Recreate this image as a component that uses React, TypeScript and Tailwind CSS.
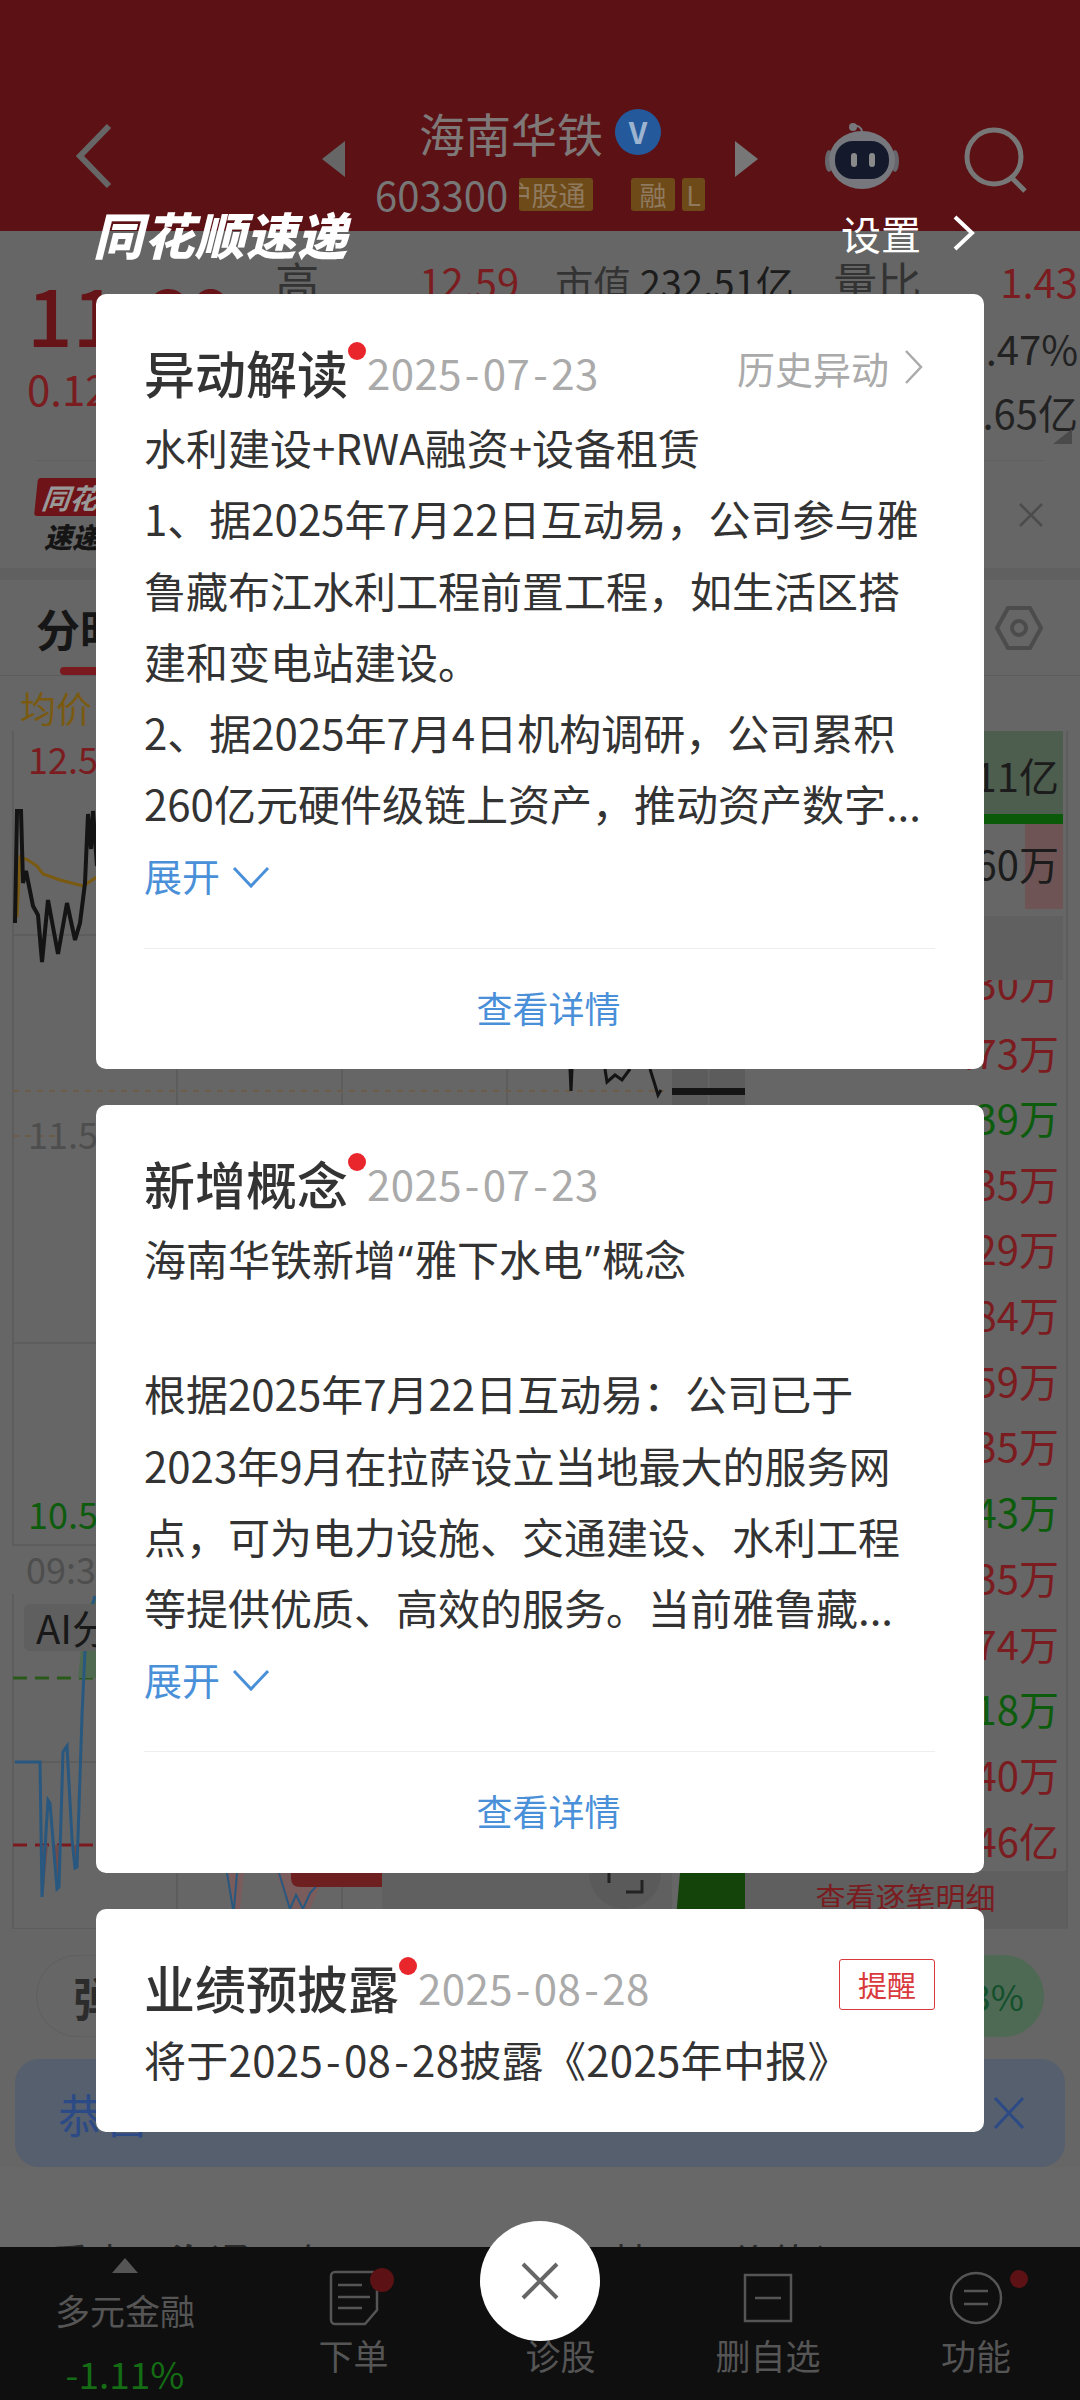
import type { ReactNode } from "react";

const red = "text-[#7a1c20]";
const green = "text-[#0d5c0d]";

const depthRows: [string, string][] = [
  ["39万", green],
  ["2.35万", red],
  ["1.29万", red],
  ["3.84万", red],
  ["1.59万", red],
  ["2.35万", red],
  ["1.43万", green],
  ["2.35万", red],
  ["1.74万", red],
  ["2.18万", green],
  ["1.40万", red],
  ["1.46亿", red],
];

const tabs = [
  { label: "下单", width: "w-[207px]" },
  { label: "诊股", width: "w-[207px]" },
  { label: "删自选", width: "w-[208px]" },
  { label: "功能", width: "w-[208px]" },
];

function Robot() {
  return (
    <svg width="76" height="66" viewBox="0 0 76 66">
      <path d="M38 8c-1-4-5-6-8-5" fill="none" stroke="#77777c" strokeWidth="2" />
      <circle cx="29" cy="4" r="4" fill="#77777c" />
      <ellipse cx="5" cy="38" rx="4" ry="11" fill="#66666c" />
      <ellipse cx="71" cy="38" rx="4" ry="11" fill="#66666c" />
      <ellipse cx="38" cy="37" rx="33" ry="29" fill="#77777e" />
      <rect x="11" y="18" width="54" height="38" rx="18" fill="#141a2c" />
      <rect x="27" y="30" width="6" height="14" rx="3" fill="#8a8a8a" />
      <rect x="45" y="30" width="6" height="14" rx="3" fill="#8a8a8a" />
    </svg>
  );
}

function Tag({ children, width }: { children: ReactNode; width: string }) {
  return (
    <span className={`${width} h-[33px] rounded-[3px] bg-[#6e4a18] text-[#8f7a5f] text-[27px] leading-[33px] text-center overflow-hidden whitespace-nowrap`}>
      {children}
    </span>
  );
}

function Header() {
  return (
    <header className="h-[231px] bg-[#5c1215] flex items-start pt-[107px]">
      <div className="w-[322px] pl-[75px] pt-[16px]">
        <svg width="40" height="66" viewBox="0 0 40 66">
          <path d="M34 3 5 33l29 30" fill="none" stroke="#666" strokeWidth="6" />
        </svg>
      </div>
      <div className="w-0 h-0 mt-[34px] border-y-[18px] border-y-transparent border-r-[23px] border-r-[#666]" />
      <div className="w-[390px] flex flex-col items-center">
        <div className="flex items-center gap-[12px] h-[50px]">
          <span className="text-[46px] leading-[50px] text-[#7f7878]">海南华铁</span>
          <span className="w-[46px] h-[46px] rounded-full bg-[#245a9c] text-[#9db4d0] text-[30px] leading-[44px] font-bold text-center">V</span>
        </div>
        <div className="flex items-center mt-[21px] h-[33px]">
          <span className="w-[144px] text-[40px] leading-[33px] text-[#777]">603300</span>
          <Tag width="w-[74px]">
            <span className="inline-block ml-[-22px]">沪股通</span>
          </Tag>
          <span className="w-[38px]" />
          <Tag width="w-[44px]">融</Tag>
          <span className="w-[7px]" />
          <Tag width="w-[23px]">L</Tag>
        </div>
      </div>
      <div className="w-0 h-0 mt-[34px] border-y-[18px] border-y-transparent border-l-[23px] border-l-[#777]" />
      <div className="ml-[66px] mt-[16px]">
        <Robot />
      </div>
      <div className="ml-[60px] mt-[16px]">
        <svg width="72" height="72" viewBox="0 0 72 72">
          <circle cx="34" cy="34" r="27" fill="none" stroke="#777" strokeWidth="5" />
          <path d="m52 55 13 13" stroke="#777" strokeWidth="5" />
        </svg>
      </div>
    </header>
  );
}

function Quote() {
  return (
    <section className="h-[229px] flex pt-[25px] relative">
      <div className="w-[280px] pl-[27px] pt-[11px]">
        <div className="text-[#661418] text-[80px] leading-[90px] font-medium">11.60</div>
        <div className={`${red} text-[42px] leading-[50px] mt-[6px]`}>0.12</div>
      </div>
      <div className="flex-1 pr-[2px]">
        <div className="flex items-center h-[50px] text-[40px] text-[#333] whitespace-nowrap">
          <span className="w-[144px] text-[44px]">高</span>
          <span className={`w-[136px] ${red}`}>12.59</span>
          <span className="w-[278px] text-[38px]">
            市值 <span className="text-[#1c1c1c]">232.51亿</span>
          </span>
          <span className="w-[167px] text-[44px]">量比</span>
          <span className={red}>1.43</span>
        </div>
        <div className="text-right text-[#222] text-[40px] leading-[50px] mt-[17px]">3.47%</div>
        <div className="text-right text-[#222] text-[40px] leading-[50px] mt-[14px]">1.65亿</div>
      </div>
      <div className="absolute right-[8px] bottom-[16px] w-0 h-0 border-b-[15px] border-b-[#4a4a4a] border-l-[19px] border-l-transparent" />
    </section>
  );
}

function NewsStrip() {
  return (
    <section className="mx-[36px] h-[108px] border-t border-[#5f5f5f] flex items-center justify-between">
      <div className="flex flex-col">
        <span className="w-[100px] h-[38px] bg-[#6e1418] text-[#999] italic font-bold text-[28px] leading-[38px] pl-[6px] -skew-x-6 rounded-[3px]">同花顺</span>
        <span className="text-[#151515] italic font-black text-[28px] leading-[32px] mt-[4px] pl-[8px]">速递</span>
      </div>
      <svg width="26" height="26" viewBox="0 0 26 26">
        <path d="m2 2 22 22M24 2 2 24" stroke="#4c4c4c" strokeWidth="2.5" />
      </svg>
    </section>
  );
}

function Tabs() {
  return (
    <section className="h-[108px] border-t-[12px] border-[#606060] border-b border-b-[#5c5c5c] flex items-center justify-between pl-[36px] pr-[36px] relative">
      <span className="text-[44px] font-bold text-[#161616]">分时</span>
      <svg width="50" height="46" viewBox="0 0 50 46">
        <path d="M14 3h22l11 20-11 20H14L3 23Z" fill="none" stroke="#4c4c4c" strokeWidth="4" strokeLinejoin="round" />
        <circle cx="25" cy="23" r="7" fill="none" stroke="#4c4c4c" strokeWidth="4" />
      </svg>
      <span className="absolute left-[60px] bottom-0 w-[60px] h-[8px] rounded-full bg-[#7a1a1e]" />
    </section>
  );
}

function Chart() {
  return (
    <div className="w-[745px] h-[1198px] relative shrink-0">
      <svg className="absolute inset-0" width="745" height="1198" viewBox="0 731 745 1198">
        <g stroke="#5d5d5d" strokeWidth="2" fill="none">
          <path d="M13 731V1545H745M13 1594V1929H745M13 935H672M13 1343H672M13 1762H672" />
          <path d="M177 731V1545M342 731V1545M507 731V1545M177 1594V1929M342 1594V1929M507 1594V1929" />
        </g>
        <path d="M13 1091H664M13 1136H60" stroke="#6b5d4a" strokeWidth="2" strokeDasharray="6 6" />
        <path d="M13 1678H96" stroke="#2a5a1a" strokeWidth="3" strokeDasharray="14 8" />
        <path d="M13 1845H96" stroke="#7a1a1e" strokeWidth="3" strokeDasharray="14 8" />
        <polyline
          points="17,917 20,857 28,860 37,866 43,874 60,880 83,886 97,877"
          fill="none"
          stroke="#7a5a10"
          strokeWidth="3"
        />
        <polyline
          points="15,923 17,811 21,811 23,883 26,871 33,906 38,915 42,962 48,900 58,954 67,903 75,940 80,923 85,883 88,814 91,849 93,811 97,866"
          fill="none"
          stroke="#141414"
          strokeWidth="4"
        />
        <polyline points="570,1069 571,1091 572,1069" fill="none" stroke="#141414" strokeWidth="3" />
        <polyline points="605,1069 607,1082 615,1075 622,1080 630,1069" fill="none" stroke="#141414" strokeWidth="3" />
        <polyline points="650,1069 655,1085 658,1095 661,1090" fill="none" stroke="#141414" strokeWidth="3" />
        <rect x="672" y="1069" width="73" height="36" fill="#5c5c5c" />
        <rect x="708" y="1069" width="1.5" height="36" fill="#666" />
        <rect x="672" y="1088" width="73" height="7" fill="#141414" />
        <path d="M42 1845 43 1897 48 1845ZM52 1845 57 1889 60 1845ZM72 1845 75 1868 78 1845Z" fill="#6e4c4c" />
        <path d="M82 1640 87 1607 96 1596V1678H78Z" fill="#4f6a50" />
        <polyline
          points="15,1762 40,1762 42,1897 48,1800 50,1803 57,1889 59,1887 63,1752 67,1746 72,1839 75,1868 77,1867 82,1716 87,1607 92,1607 95,1596"
          fill="none"
          stroke="#28587f"
          strokeWidth="3"
        />
        <path d="M227 1873 235 1909H240L244 1873ZM276 1873 290 1909H310L325 1873Z" fill="#7a5c5c" />
        <polyline points="227,1873 233,1909" fill="none" stroke="#28587f" strokeWidth="2" />
        <polyline points="237,1873 234,1909" fill="none" stroke="#28587f" strokeWidth="2" />
        <polyline points="279,1873 290,1909 296,1895 303,1909 310,1893 322,1880 324,1873" fill="none" stroke="#28587f" strokeWidth="2" />
        <path d="M291 1873H382V1887H300Q291 1887 291 1878Z" fill="#6e2020" />
        <rect x="382" y="1873" width="290" height="36" fill="#606060" />
        <ellipse cx="625" cy="1873" rx="36" ry="36" fill="#5a5a5a" />
        <path d="M609 1873V1883M642 1880V1892H626" fill="none" stroke="#222" strokeWidth="3" />
        <path d="M680 1873H745V1929H675Z" fill="#14440a" />
      </svg>
      <span className="absolute left-[20px] top-[-46px] text-[36px] leading-[44px] text-[#7a5a10]">{"均价\uFF1A"}</span>
      <span className={`absolute left-[28px] top-[5px] text-[36px] leading-[44px] ${red}`}>12.59</span>
      <span className="absolute left-[28px] top-[380px] text-[36px] leading-[44px] text-[#4e4e4e]">11.56</span>
      <span className={`absolute left-[28px] top-[760px] text-[36px] leading-[44px] ${green}`}>10.53</span>
      <span className="absolute left-[26px] top-[815px] text-[36px] leading-[44px] text-[#4e4e4e]">09:30</span>
      <span className="absolute left-[24px] top-[873px] w-[140px] h-[47px] pl-[12px] rounded-[6px] bg-[#5f5f5f] text-[40px] leading-[47px] text-[#181818] whitespace-nowrap">AI分时</span>
    </div>
  );
}

function Depth() {
  return (
    <div className="flex-1 min-w-0 h-[1198px] pr-[12px]">
      <div className="h-full w-full border-r-2 border-[#5d5d5d] pr-[3px] flex flex-col text-[40px] text-right whitespace-nowrap">
        <div className="h-[83px] bg-[#4e5e4e] text-[#1c1c1c] leading-[88px] pr-[4px]">1.11亿</div>
        <div className="h-[10px] bg-[#0a5a0a]" />
        <div className="h-[85px] relative text-[#1c1c1c] leading-[78px] pr-[4px]">
          <span className="absolute right-0 top-0 w-[38px] h-full bg-[#6e5454]" />
          <span className="relative">2.60万</span>
        </div>
        <div className="h-[7px]" />
        <div className="h-[64px] bg-[#606060]" />
        <div className={`h-[43px] overflow-hidden ${red} pr-[4px]`}>
          <div className="mt-[-21px] leading-[46px]">1.30万</div>
        </div>
        <div className={`h-[62px] ${red} leading-[58px] pr-[4px]`}>2.73万</div>
        {depthRows.map(([value, color], i) => (
          <div key={i} className={`h-[65.7px] leading-[65.7px] flex justify-between pl-[12px] pr-[4px] ${color}`}>
            <span className="flex gap-[20px] text-[36px]">
              {i === 0 && <span className="text-[#1c1c1c]">14:56</span>}
              {i === 0 && <span className={red}>11.63</span>}
            </span>
            <span>{value}</span>
          </div>
        ))}
        <div className={`mt-[-2px] mr-[-3px] flex-1 bg-[#5f5f5f] text-[30px] leading-[50px] text-center ${red}`}>查看逐笔明细</div>
      </div>
    </div>
  );
}

function BottomBar() {
  return (
    <footer className="h-[153px] bg-[#0f0f0f] flex text-[#555]">
      <div className="w-[250px] flex flex-col items-center pt-[11px]">
        <div className="w-0 h-0 border-x-[13px] border-x-transparent border-b-[15px] border-b-[#555]" />
        <div className="text-[35px] leading-[44px] mt-[15px]">多元金融</div>
        <div className="text-[37px] leading-[44px] mt-[19px] text-[#146c14]">-1.11%</div>
      </div>
      {tabs.map((t, i) => (
        <div key={t.label} className={`${t.width} flex flex-col items-center pt-[22px]`}>
          <div className="h-[58px] flex items-center relative">
            {i === 0 && (
              <>
                <svg width="50" height="56" viewBox="0 0 50 56">
                  <path d="M6 2h38a4 4 0 0 1 4 4v34L36 54H6a4 4 0 0 1-4-4V6a4 4 0 0 1 4-4Z" fill="none" stroke="#555" strokeWidth="2.5" />
                  <path d="M9 15h24M9 27h32M9 38h24" stroke="#555" strokeWidth="2.5" />
                </svg>
                <span className="absolute right-[-15px] top-[-1px] w-[24px] h-[24px] rounded-full bg-[#5c1215]" />
              </>
            )}
            {i === 2 && (
              <svg width="50" height="50" viewBox="0 0 50 50">
                <rect x="2" y="2" width="46" height="46" fill="none" stroke="#555" strokeWidth="2.5" />
                <path d="M12 25h26" stroke="#555" strokeWidth="2.5" />
              </svg>
            )}
            {i === 3 && (
              <>
                <svg width="54" height="54" viewBox="0 0 54 54">
                  <circle cx="27" cy="27" r="25" fill="none" stroke="#555" strokeWidth="2.5" />
                  <path d="M15 20h24M15 33h24" stroke="#555" strokeWidth="2.5" />
                </svg>
                <span className="absolute right-[-25px] top-[1px] w-[18px] h-[18px] rounded-full bg-[#5c1215]" />
              </>
            )}
          </div>
          <span className="text-[35px] leading-[44px] mt-[6px]">{t.label}</span>
        </div>
      ))}
    </footer>
  );
}

// the reference font has a wider hyphen than Noto, so pad it a little
function Dashed({ text }: { text: string }) {
  const parts = text.split("-");
  return (
    <>
      {parts.map((p, i) => (
        <span key={i}>
          {i > 0 && <span className="mx-[3px]">-</span>}
          {p}
        </span>
      ))}
    </>
  );
}

function Card({ title, date, action, children }: { title: string; date: string; action?: ReactNode; children: ReactNode }) {
  return (
    <article className="bg-white rounded-[10px] pl-[48px] pr-[49px] pt-[48px]">
      <div className="flex items-center h-[60px]">
        <h2 className="relative text-[51px] leading-[60px] font-medium text-[#333] whitespace-nowrap">
          {title}
          <span className="absolute right-[-18px] top-0 w-[18px] h-[18px] rounded-full bg-[#e8262c]" />
        </h2>
        <span className="ml-[19px] text-[42px] leading-[60px] text-[#aaa] tracking-[0.4px] whitespace-nowrap">
          <Dashed text={date} />
        </span>
        {action}
      </div>
      {children}
    </article>
  );
}

function Lines({ lines }: { lines: ReactNode[] }) {
  return (
    <div className="mt-[9px] text-[42px] text-[#333] whitespace-nowrap">
      {lines.map((l, i) => (
        <div key={i} className={l ? "h-[71.3px] leading-[71.3px]" : "h-[64px]"}>
          {l}
        </div>
      ))}
    </div>
  );
}

function Expand() {
  return (
    <>
      <div className="flex items-center h-[50px] mt-[11px] text-[38px] text-[#4a90d9]">
        展开
        <svg className="ml-[12px] mt-[4px]" width="38" height="24" viewBox="0 0 38 24">
          <path d="m2 3 17 18L36 3" fill="none" stroke="#4a90d9" strokeWidth="3" />
        </svg>
      </div>
      <div className="mt-[48px] h-[1px] bg-[#eeeeee]" />
      <div className="h-[120.2px] pl-[18px] text-center text-[36px] leading-[116px] text-[#4a90d9]">查看详情</div>
    </>
  );
}

function Overlay() {
  return (
    <div className="absolute inset-0 z-10 px-[96px] pt-[205px] flex flex-col">
      <div className="flex items-center justify-between h-[56px] mb-[33px] pr-[9px] text-white">
        <span className="italic font-black text-[50px] leading-[56px] tracking-[1px] ml-[-3px]">同花顺速递</span>
        <span className="flex items-center text-[40px] leading-[56px]">
          设置
          <svg className="ml-[32px]" width="22" height="36" viewBox="0 0 22 36">
            <path d="m2 2 17 16L2 34" fill="none" stroke="#fff" strokeWidth="4" />
          </svg>
        </span>
      </div>
      <div className="flex flex-col gap-[36px]">
        <Card
          title="异动解读"
          date="2025-07-23"
          action={
            <span className="ml-auto mt-[-10px] mr-[10px] flex items-center text-[38px] text-[#aaa]">
              历史异动
              <svg className="ml-[14px]" width="22" height="36" viewBox="0 0 22 36">
                <path d="m3 2 15 16L3 34" fill="none" stroke="#aaa" strokeWidth="2.5" />
              </svg>
            </span>
          }
        >
          <Lines
            lines={[
              "水利建设+RWA融资+设备租赁",
              "1、据2025年7月22日互动易\uFF0C公司参与雅",
              "鲁藏布江水利工程前置工程\uFF0C如生活区搭",
              "建和变电站建设。",
              "2、据2025年7月4日机构调研\uFF0C公司累积",
              "260亿元硬件级链上资产\uFF0C推动资产数字...",
            ]}
          />
          <Expand />
        </Card>
        <Card title="新增概念" date="2025-07-23">
          <Lines
            lines={[
              <>
                海南华铁新增<span className="font-['Noto_Sans'] mx-[2px]">“</span>雅下水电<span className="font-['Noto_Sans'] mx-[2px]">”</span>概念
              </>,
              "",
              "根据2025年7月22日互动易\uFF1A公司已于",
              "2023年9月在拉萨设立当地最大的服务网",
              "点\uFF0C可为电力设施、交通建设、水利工程",
              "等提供优质、高效的服务。当前雅鲁藏...",
            ]}
          />
          <Expand />
        </Card>
        <Card
          title="业绩预披露"
          date="2025-08-28"
          action={
            <span className="ml-auto mt-[-4px] w-[96px] h-[51px] rounded-[3px] border border-[#d9383c] text-[#d9383c] text-[29px] leading-[49px] text-center">提醒</span>
          }
        >
          <div className="mt-[6px] h-[109px] text-[42px] leading-[71.3px] tracking-[0.3px] text-[#333] whitespace-nowrap">
            将于<Dashed text="2025-08-28" />披露《2025年中报》
          </div>
        </Card>
      </div>
      <button
        type="button"
        className="self-center mt-[89px] w-[120px] h-[120px] rounded-full bg-white flex items-center justify-center"
      >
        <svg width="38" height="38" viewBox="0 0 38 38">
          <path d="m2 2 34 34M36 2 2 36" stroke="#666" strokeWidth="4" />
        </svg>
      </button>
    </div>
  );
}

export default function App() {
  return (
    <div className="relative w-[1080px] h-[2400px] overflow-hidden bg-[#666666] font-['Noto_Sans_CJK_SC','Noto_Sans',sans-serif]">
      <Header />
      <Quote />
      <NewsStrip />
      <Tabs />
      <div className="flex h-[1198px] mt-[55px]">
        <Chart />
        <Depth />
      </div>
      <div className="flex items-center justify-between h-[82px] mt-[26px] pl-[36px] pr-[36px]">
        <div className="w-[300px] h-full rounded-full border border-[#5f5f5f] pl-[36px] text-[46px] leading-[80px] font-bold text-[#2c2c2c]">弹性</div>
        <div className="w-[180px] h-full rounded-full bg-[#4e6a55] pr-[20px] text-right text-[36px] leading-[80px] text-[#14502c]">3%</div>
      </div>
      <div className="flex items-center justify-between h-[108px] mt-[22px] mx-[15px] rounded-[24px] bg-[#555f6e] pl-[43px] pr-[40px] text-[#2c4a86]">
        <span className="text-[46px]">恭喜</span>
        <svg width="32" height="34" viewBox="0 0 32 34">
          <path d="m2 2 28 30M30 2 2 32" stroke="#2c4a86" strokeWidth="3" />
        </svg>
      </div>
      <div className="h-[80px] overflow-hidden flex text-[40px] leading-[50px] text-[#2a2a2a] pt-[69px] pl-[50px] gap-[40px] bg-[#686868]">
        <span>重点</span>
        <span className="font-bold">海通</span>
        <span>专</span>
        <span className="ml-[240px]">其日</span>
        <span>价值(</span>
      </div>
      <BottomBar />
      <Overlay />
    </div>
  );
}
